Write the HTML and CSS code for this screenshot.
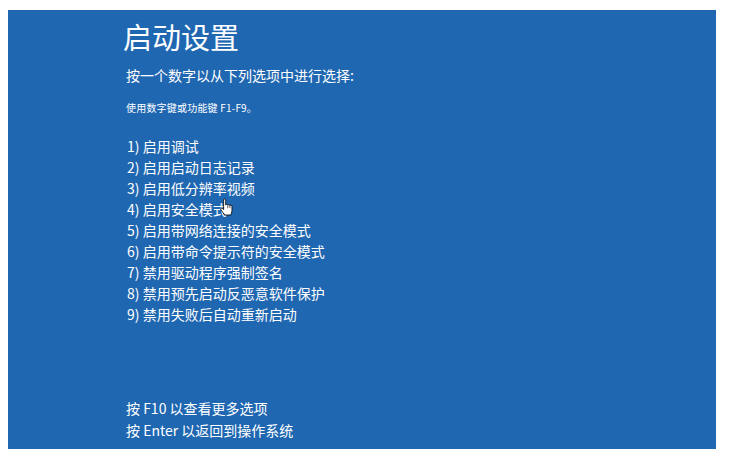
FILE: index.html
```html
<!DOCTYPE html>
<html lang="zh-CN">
<head>
<meta charset="utf-8">
<title>启动设置</title>
<link rel="stylesheet" href="styles.css">
</head>
<body>
<div class="screen">
  <h1 class="title">启动设置</h1>
  <p class="prompt">按一个数字以从下列选项中进行选择:</p>
  <p class="hint">使用数字键或功能键 F1-F9。</p>
  <ol class="options">
    <li>1) 启用调试</li>
    <li>2) 启用启动日志记录</li>
    <li>3) 启用低分辨率视频</li>
    <li>4) 启用安全模式</li>
    <li>5) 启用带网络连接的安全模式</li>
    <li>6) 启用带命令提示符的安全模式</li>
    <li>7) 禁用驱动程序强制签名</li>
    <li>8) 禁用预先启动反恶意软件保护</li>
    <li>9) 禁用失败后自动重新启动</li>
  </ol>
  <div class="footer">
    <p>按 F10 以查看更多选项</p>
    <p>按 Enter 以返回到操作系统</p>
  </div>
  <svg class="cursor" width="13" height="18" viewBox="0 0 12.5 17" aria-hidden="true">
    <path d="M3.5,1.5 C3.5,0.5 5.5,0.5 5.5,1.5 L5.5,6.6 C5.5,5.7 7.5,5.7 7.5,6.8 C7.5,6 9.5,6 9.5,7.2 C9.5,6.5 11.5,6.5 11.5,7.6 L11.5,12 C11.5,13.8 10.8,15 10.3,16.2 L4.6,16.2 C3.6,14.6 2.2,13.2 0.9,11.2 C0.3,10.1 1.3,9.1 2.2,9.8 L3.5,11 Z" fill="#fff" stroke="#000" stroke-width="0.8" stroke-linejoin="round"/>
    <path d="M7.5,7 L7.5,9.6 M9.5,7.4 L9.5,9.6" stroke="#000" stroke-width="0.6" fill="none"/>
  </svg>
</div>
</body>
</html>
```

FILE: styles.css
```css
html, body {
  margin: 0;
  padding: 0;
  background: #ffffff;
}

body {
  font-family: "Noto Sans CJK SC", "Noto Sans", sans-serif;
  color: #ffffff;
}

.screen {
  position: relative;
  box-sizing: border-box;
  margin: 10px 0 0 8px;
  width: 708px;
  height: 439px;
  background: #2067b2;
  padding: 9px 0 8px 118px;
  display: flex;
  flex-direction: column;
}

.title {
  margin: 0 0 0 -3px;
  font-size: 29px;
  line-height: 34px;
  font-weight: 400;
}

.prompt {
  margin: 12px 0 0;
  font-size: 14px;
  line-height: 20px;
}

.hint {
  margin: 16px 0 0;
  font-size: 10px;
  line-height: 14px;
  letter-spacing: 0.2px;
}

.options {
  list-style: none;
  margin: 21px 0 0;
  padding: 0 0 0 1px;
  font-size: 14px;
  line-height: 21px;
}

.footer {
  margin-top: auto;
  font-size: 14px;
  line-height: 22px;
}

.footer p {
  margin: 0;
}

.cursor {
  position: absolute;
  left: 212px;
  top: 188px;
}
```
